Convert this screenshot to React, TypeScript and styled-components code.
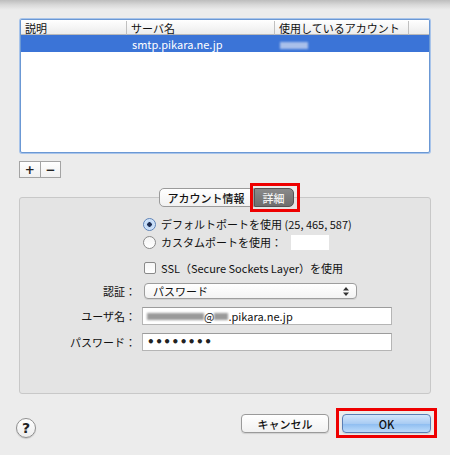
import styled, { createGlobalStyle } from "styled-components"

const GlobalStyle = createGlobalStyle`
    html, body {
        margin: 0;
        padding: 0;
        background: #ececec;
    }
    body {
        width: 450px;
        height: 455px;
        overflow: hidden;
        font-family: "Noto Sans CJK JP", "Noto Sans", sans-serif;
        font-size: 11px;
        color: #111;
    }
`;

const Sheet = styled.div`
    width: 450px;
    height: 455px;
    display: flex;
    flex-direction: column;
    background: #ececec;
`;

const TopShadow = styled.div`
    height: 10px;
    background: linear-gradient(#bdbdbd, #d9d9d9 50%, #ececec);
`;

const Content = styled.div`
    padding: 0 19px;
    display: flex;
    flex-direction: column;
`;

const Table = styled.div`
    margin-top: 9px;
    height: 132px;
    background: #fff;
    border: 1px solid #6b98d4;
    box-shadow: 0 0 0 1px #a8c4ea;
    margin-left: 1px;
    margin-right: 1px;
    border-radius: 2px;
    display: flex;
    flex-direction: column;
    overflow: hidden;
`;

const HeaderRow = styled.div`
    display: grid;
    grid-template-columns: 106px 148px 134px 1fr;
    height: 14px;
    background: linear-gradient(#ffffff, #ececec);
    border-bottom: 1px solid #b9b9b9;
`;

const HeaderCell = styled.div<{ $sep?: boolean }>`
    display: flex;
    align-items: center;
    padding-left: 4px;
    line-height: 14px;
    border-right: ${p => (p.$sep ? "1px solid #c0c0c0" : "none")};
    margin: 1px 0;
    color: #111;
    white-space: nowrap;
`;

const SelectedRow = styled.div`
    display: grid;
    grid-template-columns: 106px 148px 1fr;
    height: 17px;
    background: #3b74d7;
    color: #fff;
    align-items: center;
`;

const Cell = styled.div`
    padding-left: 5px;
    white-space: nowrap;
`;

const Blur = styled.span<{ $w: number; $c: string }>`
    display: inline-block;
    width: ${p => p.$w}px;
    height: 7px;
    background: ${p => p.$c};
    filter: blur(1px);
    vertical-align: middle;
`;

const PlusMinus = styled.div`
    margin-top: 8px;
    display: flex;
    width: 42px;
    height: 17px;
    border: 1px solid #a4a4a4;
    box-sizing: border-box;
    background: linear-gradient(#ffffff, #f0f0f0);
`;

const PMButton = styled.div<{ $first?: boolean }>`
    flex: 1;
    display: flex;
    align-items: center;
    justify-content: center;
    border-right: ${p => (p.$first ? "1px solid #a4a4a4" : "none")};
    font-family: "DejaVu Sans", sans-serif;
    font-weight: bold;
    font-size: 12px;
    color: #222;
`;

const Tabs = styled.div`
    margin-top: 10px;
    display: flex;
    justify-content: center;
    position: relative;
    z-index: 1;
    padding-left: 2px;
`;

// red annotation frame drawn over a control
const Highlight = styled.span<{ $t: number; $r: number; $b: number; $l: number }>`
    position: relative;
    display: flex;
    &::after {
        content: "";
        position: absolute;
        top: -${p => p.$t}px;
        right: -${p => p.$r}px;
        bottom: -${p => p.$b}px;
        left: -${p => p.$l}px;
        border: 3px solid #ee0000;
        pointer-events: none;
    }
`;

const Tab = styled.div<{ $active?: boolean; $pos: "left" | "right" }>`
    height: 19px;
    box-sizing: border-box;
    padding: 0 8px;
    display: flex;
    align-items: center;
    border: 1px solid ${p => (p.$active ? "#555" : "#9a9a9a")};
    border-radius: ${p => (p.$pos === "left" ? "5px 0 0 5px" : "0 5px 5px 0")};
    background: ${p =>
        p.$active
            ? "linear-gradient(#8a8a8a, #6e6e6e)"
            : "linear-gradient(#ffffff, #f1f1f1)"};
    color: ${p => (p.$active ? "#f4f4f4" : "#111")};
    font-weight: 500;
`;

const Box = styled.div`
    margin-top: -10px;
    height: 197px;
    box-sizing: border-box;
    border: 1px solid #c8c8c8;
    border-radius: 3px;
    background: #e4e4e4;
    padding-top: 17px;
    display: flex;
    flex-direction: column;
`;

const OptionRow = styled.div<{ $gap?: number }>`
    height: 18px;
    margin-top: ${p => p.$gap ?? 0}px;
    padding-left: 123px;
    display: flex;
    align-items: center;
    gap: 5px;
    white-space: nowrap;
`;

const Radio = styled.span<{ $on?: boolean }>`
    width: 11px;
    height: 11px;
    border-radius: 50%;
    border: 1px solid #8a8a8a;
    background: ${p =>
        p.$on
            ? "radial-gradient(circle, #1d2d52 0 2px, #bcd6f5 2.5px, #e9f2fd)"
            : "linear-gradient(#f4f4f4, #ffffff)"};
    border-color: ${p => (p.$on ? "#5b82b8" : "#8a8a8a")};
`;

const Check = styled.span`
    width: 10px;
    height: 10px;
    border-radius: 2px;
    border: 1px solid #8a8a8a;
    background: linear-gradient(#f6f6f6, #ffffff);
    margin-left: 1px;
`;

const PortField = styled.span`
    width: 38px;
    height: 15px;
    background: #fff;
    margin-left: 4px;
`;

const FieldRow = styled.div<{ $gap: number; $h: number }>`
    margin-top: ${p => p.$gap}px;
    height: ${p => p.$h}px;
    display: flex;
    align-items: center;
`;

const Label = styled.div`
    width: 116px;
    text-align: right;
    padding-right: 6px;
    white-space: nowrap;
`;

const Popup = styled.div`
    margin-left: 2px;
    width: 213px;
    height: 16px;
    box-sizing: border-box;
    border: 1px solid #9d9d9d;
    border-radius: 4px;
    background: linear-gradient(#ffffff, #f3f3f3);
    display: flex;
    align-items: center;
    justify-content: space-between;
    padding: 0 7px 0 8px;
    box-shadow: 0 1px 0 rgba(0, 0, 0, 0.08);
`;

const TextField = styled.div`
    width: 250px;
    height: 18px;
    box-sizing: border-box;
    border: 1px solid #b5b5b5;
    border-top-color: #9c9c9c;
    background: #fff;
    display: flex;
    align-items: center;
    padding-left: 4px;
    white-space: nowrap;
`;

const Dots = styled.span`
    letter-spacing: 0.5px;
    font-size: 12px;
    font-family: "DejaVu Sans", sans-serif;
    font-weight: bold;
    color: #222;
    line-height: 1;
`;

const Footer = styled.div`
    margin-top: 20px;
    padding: 0 19px 0 16px;
    display: flex;
    align-items: flex-start;
`;

const Help = styled.div`
    margin-top: 4px;
    width: 20px;
    height: 20px;
    box-sizing: border-box;
    border-radius: 50%;
    border: 1px solid #8f8f8f;
    background: linear-gradient(#ffffff, #ededed);
    display: flex;
    align-items: center;
    justify-content: center;
    font-family: "DejaVu Sans", sans-serif;
    font-weight: bold;
    font-size: 14px;
    color: #222;
    box-shadow: 0 1px 1px rgba(0, 0, 0, 0.15);
`;

const Spacer = styled.div`
    flex: 1;
`;

const Button = styled.div<{ $primary?: boolean }>`
    height: 19px;
    box-sizing: border-box;
    width: ${p => (p.$primary ? "89px" : "88px")};
    border: 1px solid ${p => (p.$primary ? "#5a7fb5" : "#9a9a9a")};
    border-radius: 4px;
    background: ${p =>
        p.$primary
            ? "linear-gradient(#d3e6fb, #a9ccf3 50%, #8dbcf0 51%, #bcdcfb)"
            : "linear-gradient(#ffffff, #f1f1f1)"};
    display: flex;
    align-items: center;
    justify-content: center;
    font-weight: 500;
    color: #111;
    box-shadow: 0 1px 1px rgba(0, 0, 0, 0.12);
`;

const OkSlot = styled.div`
    margin-left: 13px;
    display: flex;
`;

function UpDown() {
    return (
        <svg width="6" height="9" viewBox="0 0 6 9">
            <path d="M3 0 L6 3.5 H0 Z M3 9 L6 5.5 H0 Z" fill="#333" />
        </svg>
    )
}

export default function App() {
    return (
        <Sheet>
            <GlobalStyle />
            <TopShadow />
            <Content>
                <Table>
                    <HeaderRow>
                        <HeaderCell $sep>説明</HeaderCell>
                        <HeaderCell $sep>サーバ名</HeaderCell>
                        <HeaderCell $sep>使用しているアカウント</HeaderCell>
                        <HeaderCell />
                    </HeaderRow>
                    <SelectedRow>
                        <Cell />
                        <Cell>smtp.pikara.ne.jp</Cell>
                        <Cell>
                            <Blur $w={28} $c="#a9c0ea" />
                        </Cell>
                    </SelectedRow>
                </Table>
                <PlusMinus>
                    <PMButton $first>+</PMButton>
                    <PMButton>−</PMButton>
                </PlusMinus>
                <Tabs>
                    <Tab $pos="left">アカウント情報</Tab>
                    <Highlight $t={5} $r={6} $b={5} $l={4}>
                        <Tab $pos="right" $active>詳細</Tab>
                    </Highlight>
                </Tabs>
                <Box>
                    <OptionRow>
                        <Radio $on />
                        <span>デフォルトポートを使用 (25, 465, 587)</span>
                    </OptionRow>
                    <OptionRow>
                        <Radio />
                        <span>カスタムポートを使用：</span>
                        <PortField />
                    </OptionRow>
                    <OptionRow $gap={8}>
                        <Check />
                        <span>SSL（Secure Sockets Layer）を使用</span>
                    </OptionRow>
                    <FieldRow $gap={6} $h={16}>
                        <Label>認証：</Label>
                        <Popup>
                            <span>パスワード</span>
                            <UpDown />
                        </Popup>
                    </FieldRow>
                    <FieldRow $gap={8} $h={18}>
                        <Label>ユーザ名：</Label>
                        <TextField>
                            <Blur $w={57} $c="#9a9a9a" />
                            <span>@</span>
                            <Blur $w={14} $c="#9a9a9a" />
                            <span>.pikara.ne.jp</span>
                        </TextField>
                    </FieldRow>
                    <FieldRow $gap={8} $h={18}>
                        <Label>パスワード：</Label>
                        <TextField>
                            <Dots>••••••••</Dots>
                        </TextField>
                    </FieldRow>
                </Box>
            </Content>
            <Footer>
                <Help>?</Help>
                <Spacer />
                <Button>キャンセル</Button>
                <OkSlot>
                    <Highlight $t={6} $r={6} $b={5} $l={6}>
                        <Button $primary>OK</Button>
                    </Highlight>
                </OkSlot>
            </Footer>
        </Sheet>
    )
}
